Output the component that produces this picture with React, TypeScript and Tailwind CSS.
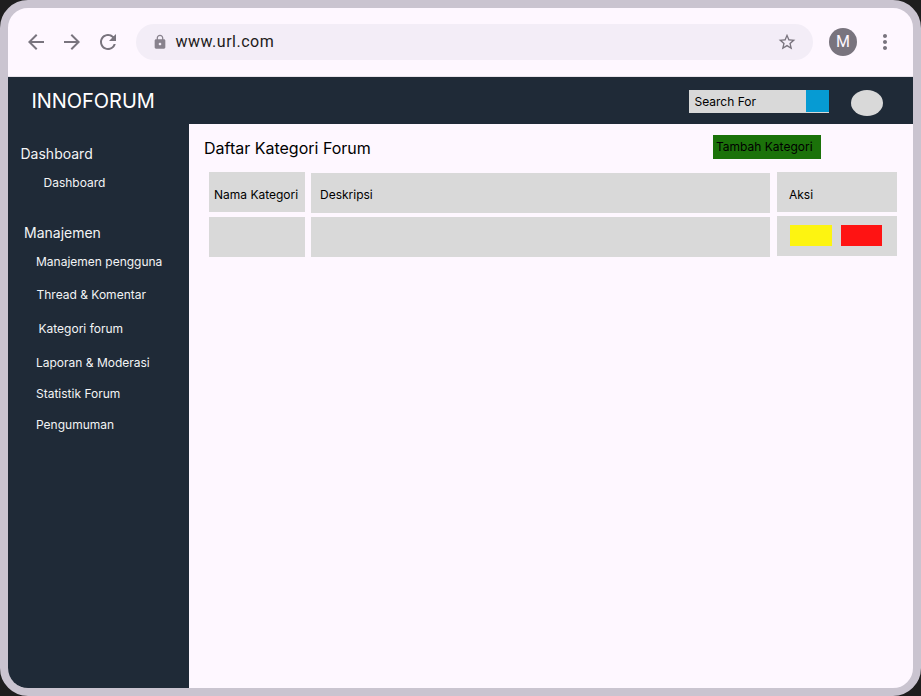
import type { ReactNode } from "react";
import { MdArrowBack, MdArrowForward, MdLock, MdMoreVert, MdRefresh, MdStarBorder } from "react-icons/md";

function BrowserBar() {
  return (
    <div className="flex h-[69px] shrink-0 items-center border-b border-[#e8e3ea] pl-4 text-[#79747e]">
      <MdArrowBack size={24} />
      <MdArrowForward size={24} className="ml-3" />
      <MdRefresh size={24} className="ml-3" />
      <div className="ml-4 flex h-9 w-[677px] items-center rounded-full bg-[#f3edf7]">
        <MdLock size={16} className="ml-[15.5px] text-[#88828d]" />
        <span className="ml-2 font-['Roboto',sans-serif] text-base leading-6 tracking-[0.5px] text-[#1d1b20]">
          www.url.com
        </span>
        <MdStarBorder size={20} className="mr-4 ml-auto" />
      </div>
      <div className="ml-4 flex size-7 items-center justify-center rounded-full bg-[#79747e] font-['Roboto',sans-serif] text-base leading-6 text-[#fef7ff]">
        M
      </div>
      <MdMoreVert size={24} className="ml-4" />
    </div>
  );
}

function Header() {
  return (
    <header className="flex h-[47px] shrink-0 items-start bg-[#1f2a37] text-white">
      <h1 className="mt-3 ml-[23.5px] text-xl leading-6 tracking-[-0.05px]">INNOFORUM</h1>
      <div className="mt-[13px] mr-[22px] ml-auto flex h-[23px] w-[140px] items-start justify-between bg-[#d9d9d9] text-black">
        <span className="pl-[5.5px] text-xs leading-6">Search For</span>
        <button className="h-[22px] w-[23px] bg-[#069bd3]" aria-label="Search" />
      </div>
      <div className="mt-[13px] mr-[30px] h-[26px] w-8 rounded-[50%] bg-[#d9d9d9]" />
    </header>
  );
}

function Item({ className, children }: { className: string; children: ReactNode }) {
  return <a className={`block text-xs leading-4 whitespace-nowrap ${className}`}>{children}</a>;
}

function Sidebar() {
  return (
    <nav className="w-[181px] shrink-0 bg-[#1f2a37] pt-5 text-[#f3f4f5]">
      <h2 className="ml-[12.5px] text-sm leading-5">Dashboard</h2>
      <Item className="mt-[11px] ml-[35.5px]">Dashboard</Item>
      <h2 className="mt-8 ml-4 text-sm leading-5">Manajemen</h2>
      <Item className="mt-[11px] ml-7">Manajemen pengguna</Item>
      <Item className="mt-[17px] ml-[28.5px]">Thread &amp; Komentar</Item>
      <Item className="mt-[18px] ml-[30.5px]">Kategori forum</Item>
      <Item className="mt-[18px] ml-7">Laporan &amp; Moderasi</Item>
      <Item className="mt-[15px] ml-7">Statistik Forum</Item>
      <Item className="mt-[15px] ml-7">Pengumuman</Item>
    </nav>
  );
}

function CategoryTable() {
  return (
    <div className="ml-5 flex items-start text-xs leading-4 text-black">
      <div className="flex w-24 flex-col gap-[5px]">
        <div className="h-10 bg-[#d9d9d9] pt-[15px] pl-[5px] whitespace-nowrap">Nama Kategori</div>
        <div className="h-10 bg-[#d9d9d9]" />
      </div>
      <div className="mt-px ml-1.5 flex w-[459px] flex-col gap-1">
        <div className="h-10 bg-[#d9d9d9] pt-3.5 pl-[9px]">Deskripsi</div>
        <div className="h-10 bg-[#d9d9d9]" />
      </div>
      <div className="ml-[7px] flex w-[120px] flex-col gap-1">
        <div className="h-10 bg-[#d9d9d9] pt-[15px] pl-3">Aksi</div>
        <div className="flex h-10 gap-[9px] bg-[#d9d9d9] pt-[9px] pl-[13px]">
          <button className="h-[21px] w-[42px] bg-[#fdf411]" aria-label="Edit" />
          <button className="h-[21px] w-[41px] bg-[#ff1313]" aria-label="Hapus" />
        </div>
      </div>
    </div>
  );
}

export default function App() {
  return (
    <div className="h-[696px] w-[921px] overflow-hidden bg-[#1e1e1e] font-['Inter',sans-serif]">
      <div className="flex h-full flex-col overflow-hidden rounded-[28px] border-8 border-[#cac4d0] bg-[#fef7ff]">
        <BrowserBar />
        <Header />
        <div className="flex min-h-0 flex-1">
          <Sidebar />
          <main className="flex-1">
            <div className="flex h-12 items-start justify-between">
              <h2 className="mt-3 ml-[15px] text-base leading-6 text-black">Daftar Kategori Forum</h2>
              <button className="mt-[11px] mr-[92px] h-6 w-[108px] bg-[#1b720a] pl-[3px] text-left text-xs leading-6 whitespace-nowrap text-black">
                Tambah Kategori
              </button>
            </div>
            <CategoryTable />
          </main>
        </div>
      </div>
    </div>
  );
}
